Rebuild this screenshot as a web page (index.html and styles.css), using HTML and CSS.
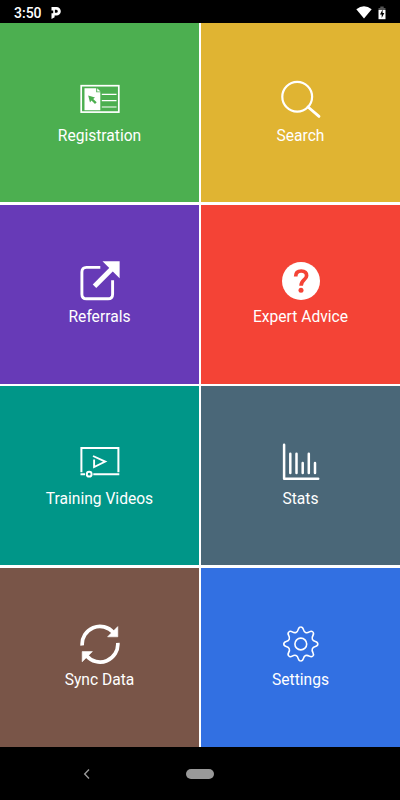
FILE: index.html
```html
<!doctype html>
<html lang="en">
  <head>
    <meta charset="UTF-8" />
    <title>Home</title>
    <link rel="stylesheet" href="styles.css">
  </head>
  <body>
    <!-- Status bar -->
    <header class="status-bar">
      <span class="time">3:50</span>
      <svg class="app-icon" width="12" height="14" viewBox="0 0 12 14">
        <path d="M1.5 1H6.5A4.2 4.2 0 0 1 6.5 9.6H4.6V11.2L1.5 13V7.2H3.2V4.6H1.5Z" fill="#fff" />
        <path d="M4.9 3.8H6.3A1.4 1.4 0 0 1 6.3 6.8H4.9Z" fill="#000" />
      </svg>
      <svg class="wifi" width="16" height="13" viewBox="0 0 16 13">
        <path d="M0.3 3.2Q8-2.6 15.7 3.2L8 12.6Z" fill="#fff" />
      </svg>
      <svg class="battery" width="8" height="14" viewBox="0 0 8 14">
        <path d="M2.3 0.5H5.7V2H7.5V4H0.5V2H2.3Z" fill="#555" />
        <path d="M0.5 4H7.5V13.2H0.5Z" fill="#fff" />
        <path d="M4.6 3.5L2 8.6H3.7V12L6.3 7H4.6Z" fill="#000" />
      </svg>
    </header>

    <main class="menu">
      <div class="tile registration">
        <svg class="icon" viewBox="0 0 40 40">
          <rect x="1.2" y="6.7" width="37.6" height="26.4" fill="none" stroke="#fff" stroke-width="1.7" />
          <path d="M4.5 9.3H16.2V13.3H20.3V31.2H4.5Z" fill="#fff" />
          <path d="M17.2 9.3L20.5 12.5H17.2Z" fill="#fff" />
          <path d="M8.2 16.6L15 18.4L13.2 19.9L16.7 23.2L15 24.9L11.5 21.6L10 23.4Z" fill="#4caf50" />
          <path d="M21.8 15.4H36.5M21.8 21.6H36.5M21.8 28H36.5" stroke="#fff" stroke-width="1.1" />
        </svg>
        <span>Registration</span>
      </div>

      <div class="tile search">
        <svg class="icon" viewBox="0 0 40 40">
          <circle cx="16.2" cy="17.8" r="14.9" fill="none" stroke="#fff" stroke-width="2.2" />
          <path d="M27 28L38 37.4" stroke="#fff" stroke-width="2.8" stroke-linecap="round" />
        </svg>
        <span>Search</span>
      </div>

      <div class="tile referrals">
        <svg class="icon" viewBox="0 0 40 40">
          <path d="M20.3 6.4H6.5Q1.9 6.4 1.9 11V33.2Q1.9 37.8 6.5 37.8H28Q32.6 37.8 32.6 33.2V19.3" fill="none" stroke="#fff" stroke-width="2.9" />
          <path d="M14.5 25.2L34.2 5.6" stroke="#fff" stroke-width="5" />
          <path d="M22.5 0.2H39.6V17.2Z" fill="#fff" />
        </svg>
        <span>Referrals</span>
      </div>

      <div class="tile advice">
        <svg class="icon" viewBox="0 0 40 40">
          <circle cx="20" cy="20" r="19" fill="#fff" />
          <path d="M14.7 15.4C14.7 11.7 16.8 10 20.2 10C23.6 10 25.6 11.7 25.6 14.7C25.6 18.9 20.1 18.6 20.1 24.7" fill="none" stroke="#f44336" stroke-width="3.7" />
          <circle cx="20" cy="29.2" r="2.5" fill="#f44336" />
        </svg>
        <span>Expert Advice</span>
      </div>

      <div class="tile videos">
        <svg class="icon" viewBox="0 0 40 40">
          <path d="M1.4 30.3V5.9H38.4V30.3" fill="none" stroke="#fff" stroke-width="2" />
          <path d="M0.5 32.2H5M13.3 32.2H39.3" stroke="#fff" stroke-width="1.9" />
          <circle cx="9.2" cy="32.2" r="2.4" fill="none" stroke="#fff" stroke-width="2" />
          <path d="M13 14L25.2 19.6L14.1 25V17.4" fill="none" stroke="#fff" stroke-width="1.9" />
        </svg>
        <span>Training Videos</span>
      </div>

      <div class="tile stats">
        <svg class="icon" viewBox="0 0 40 40">
          <g fill="none" stroke="#fff" stroke-width="2.5" stroke-linecap="round" stroke-linejoin="round">
            <path d="M3.1 2.8V36.7H37.2" />
            <path d="M9.3 11.7V31M15.5 11.7V31M21.7 21V31M27.8 11.7V31M34 21V31" />
          </g>
        </svg>
        <span>Stats</span>
      </div>

      <div class="tile sync">
        <svg class="icon" viewBox="0 0 40 40">
          <g id="arc">
            <path d="M2.2 21.5A17.8 17.8 0 0 1 33.5 8.6" fill="none" stroke="#fff" stroke-width="3.7" />
            <path d="M37.8 2.6V12.8H27.6Z" fill="#fff" stroke="#fff" stroke-width="0.6" />
          </g>
          <use href="#arc" transform="rotate(180 20 20.2)" />
        </svg>
        <span>Sync Data</span>
      </div>

      <div class="tile settings">
        <svg class="icon" viewBox="-19.8 -20 40 40">
          <g fill="none" stroke="#fff" stroke-width="1.6">
            <circle r="5.9" />
            <!-- one eighth of the gear, repeated around the centre -->
            <path id="tooth" d="M0-17C3.6-17 1.5-12.9 4.78-11.55C8.1-10.17 9.48-14.56 12.02-12.02" />
            <use href="#tooth" transform="rotate(45)" />
            <use href="#tooth" transform="rotate(90)" />
            <use href="#tooth" transform="rotate(135)" />
            <use href="#tooth" transform="rotate(180)" />
            <use href="#tooth" transform="rotate(225)" />
            <use href="#tooth" transform="rotate(270)" />
            <use href="#tooth" transform="rotate(315)" />
          </g>
        </svg>
        <span>Settings</span>
      </div>
    </main>

    <!-- Android navigation -->
    <footer class="nav-bar">
      <svg class="back" width="8" height="12" viewBox="0 0 8 12">
        <path d="M6 1.5L1.7 6L6 10.5" fill="none" stroke="#999" stroke-width="1.4" />
      </svg>
      <span class="home"></span>
    </footer>
  </body>
</html>
```

FILE: styles.css
```css
body {
  margin: 0;
  width: 400px;
  height: 800px;
  display: flex;
  flex-direction: column;
  overflow: hidden;
  background-color: #fff;
  color: #fff;
  font-family: Roboto, sans-serif;
}

/* Status bar */
.status-bar {
  box-sizing: border-box;
  height: 23px;
  padding: 2px 14px 0;
  display: flex;
  align-items: center;
  background-color: #000;
}

.time {
  width: 36px;
  font-size: 14px;
  font-weight: 500;
  line-height: 20px;
}

.wifi {
  margin-left: auto;
  margin-right: 6px;
}

/* Menu tiles */
.menu {
  height: 724px;
  display: grid;
  grid-template-columns: 199px 199px;
  grid-template-rows: repeat(4, 1fr);
  gap: 2.3px 2px;
}

.tile {
  display: flex;
  flex-direction: column;
  align-items: center;
  padding-top: 56px;
  font-size: 15.6px;
  line-height: 20px;
}

.icon {
  width: 40px;
  height: 40px;
  margin-bottom: 6.5px;
}

.registration {
  background-color: #4caf50;
}

.search {
  background-color: #e0b432;
}

.referrals {
  background-color: #673ab7;
}

.advice {
  background-color: #f44336;
}

.videos {
  background-color: #009688;
}

.stats {
  background-color: #4a6778;
}

.sync {
  background-color: #795548;
}

.settings {
  background-color: #3270e2;
}

/* Bottom navigation */
.nav-bar {
  flex: 1;
  display: flex;
  align-items: center;
  background-color: #000;
}

.back {
  margin-left: 83px;
}

.home {
  width: 28px;
  height: 10px;
  margin-left: 95px;
  border-radius: 5px;
  background-color: #999;
}
```
